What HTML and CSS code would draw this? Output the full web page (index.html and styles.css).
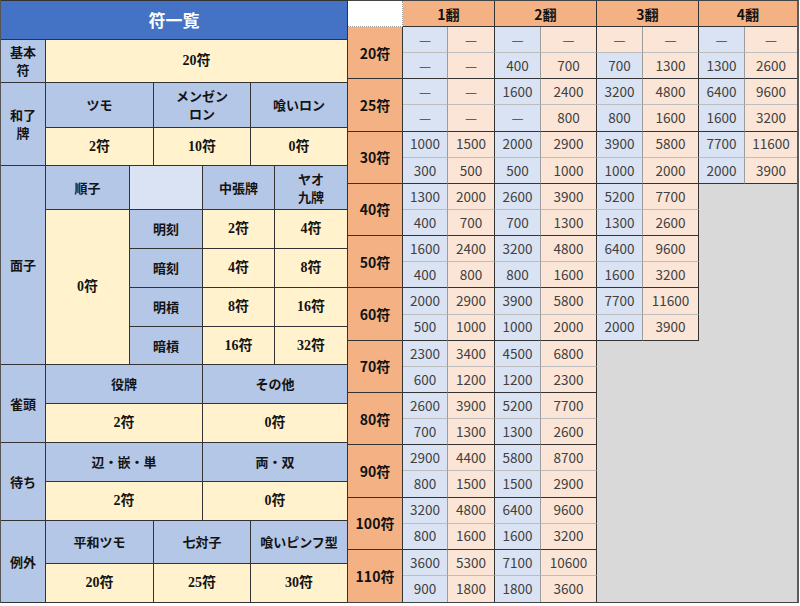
FILE: index.html
```html
<!DOCTYPE html>
<html lang="ja">
<head>
<meta charset="utf-8">
<title>符一覧</title>
<link rel="stylesheet" href="styles.css">
</head>
<body>
<main class="page">
  <section class="fu">
    <div class="c title">符一覧</div>

    <div class="c lab">基本<br>符</div>
    <div class="c val c-all">20符</div>

    <div class="c lab sp2">和了<br>牌</div>
    <div class="c hd ca">ツモ</div>
    <div class="c hd cb">メンゼン<br>ロン</div>
    <div class="c hd cc">喰いロン</div>
    <div class="c val ca">2符</div>
    <div class="c val cb">10符</div>
    <div class="c val cc">0符</div>

    <div class="c lab sp5">面子</div>
    <div class="c hd c-shun">順子</div>
    <div class="c blank c-kind"></div>
    <div class="c hd c-chu">中張牌</div>
    <div class="c hd c-yao">ヤオ<br>九牌</div>
    <div class="c val c-shun sp4">0符</div>
    <div class="c hd c-kind">明刻</div>
    <div class="c val c-chu">2符</div>
    <div class="c val c-yao">4符</div>
    <div class="c hd c-kind">暗刻</div>
    <div class="c val c-chu">4符</div>
    <div class="c val c-yao">8符</div>
    <div class="c hd c-kind">明槓</div>
    <div class="c val c-chu">8符</div>
    <div class="c val c-yao">16符</div>
    <div class="c hd c-kind">暗槓</div>
    <div class="c val c-chu">16符</div>
    <div class="c val c-yao">32符</div>

    <div class="c lab sp2">雀頭</div>
    <div class="c hd cl">役牌</div>
    <div class="c hd cr">その他</div>
    <div class="c val cl">2符</div>
    <div class="c val cr">0符</div>

    <div class="c lab sp2">待ち</div>
    <div class="c hd cl">辺・嵌・単</div>
    <div class="c hd cr">両・双</div>
    <div class="c val cl">2符</div>
    <div class="c val cr">0符</div>

    <div class="c lab sp2">例外</div>
    <div class="c hd ca">平和ツモ</div>
    <div class="c hd cb">七対子</div>
    <div class="c hd cc">喰いピンフ型</div>
    <div class="c val ca">20符</div>
    <div class="c val cb">25符</div>
    <div class="c val cc">30符</div>
  </section>

  <section class="rt">
    <div class="corner"></div>
    <div class="h">1翻</div>
    <div class="h">2翻</div>
    <div class="h">3翻</div>
    <div class="h e">4翻</div>

    <div class="f">20符</div>
    <div class="x b">—</div><div class="x p k">—</div><div class="x b">—</div><div class="x p k">—</div><div class="x p">—</div><div class="x p k">—</div><div class="x b">—</div><div class="x p k e">—</div>
    <div class="x b d s2">—</div><div class="x p k d">—</div><div class="x b d">400</div><div class="x p k d">700</div><div class="x b d">700</div><div class="x p k d">1300</div><div class="x b d">1300</div><div class="x p k d e">2600</div>

    <div class="f">25符</div>
    <div class="x b">—</div><div class="x p k">—</div><div class="x b">1600</div><div class="x p k">2400</div><div class="x b">3200</div><div class="x p k">4800</div><div class="x b">6400</div><div class="x p k e">9600</div>
    <div class="x b d s2">—</div><div class="x p k d">—</div><div class="x b d">—</div><div class="x p k d">800</div><div class="x b d">800</div><div class="x p k d">1600</div><div class="x b d">1600</div><div class="x p k d e">3200</div>

    <div class="f">30符</div>
    <div class="x b">1000</div><div class="x p k">1500</div><div class="x b">2000</div><div class="x p k">2900</div><div class="x b">3900</div><div class="x p k">5800</div><div class="x b">7700</div><div class="x p k e">11600</div>
    <div class="x b d s2">300</div><div class="x p k d">500</div><div class="x b d">500</div><div class="x p k d">1000</div><div class="x b d">1000</div><div class="x p k d">2000</div><div class="x b d">2000</div><div class="x p k d e">3900</div>

    <div class="f">40符</div>
    <div class="x b">1300</div><div class="x p k">2000</div><div class="x b">2600</div><div class="x p k">3900</div><div class="x b">5200</div><div class="x p k">7700</div>
    <div class="x b d s2">400</div><div class="x p k d">700</div><div class="x b d">700</div><div class="x p k d">1300</div><div class="x b d">1300</div><div class="x p k d">2600</div>

    <div class="f">50符</div>
    <div class="x b">1600</div><div class="x p k">2400</div><div class="x b">3200</div><div class="x p k">4800</div><div class="x b">6400</div><div class="x p k">9600</div>
    <div class="x b d s2">400</div><div class="x p k d">800</div><div class="x b d">800</div><div class="x p k d">1600</div><div class="x b d">1600</div><div class="x p k d">3200</div>

    <div class="f">60符</div>
    <div class="x b">2000</div><div class="x p k">2900</div><div class="x b">3900</div><div class="x p k">5800</div><div class="x b">7700</div><div class="x p k">11600</div>
    <div class="x b d s2">500</div><div class="x p k d">1000</div><div class="x b d">1000</div><div class="x p k d">2000</div><div class="x b d">2000</div><div class="x p k d">3900</div>

    <div class="f">70符</div>
    <div class="x b">2300</div><div class="x p k">3400</div><div class="x b">4500</div><div class="x p k">6800</div>
    <div class="x b d s2">600</div><div class="x p k d">1200</div><div class="x b d">1200</div><div class="x p k d">2300</div>

    <div class="f">80符</div>
    <div class="x b">2600</div><div class="x p k">3900</div><div class="x b">5200</div><div class="x p k">7700</div>
    <div class="x b d s2">700</div><div class="x p k d">1300</div><div class="x b d">1300</div><div class="x p k d">2600</div>

    <div class="f">90符</div>
    <div class="x b">2900</div><div class="x p k">4400</div><div class="x b">5800</div><div class="x p k">8700</div>
    <div class="x b d s2">800</div><div class="x p k d">1500</div><div class="x b d">1500</div><div class="x p k d">2900</div>

    <div class="f">100符</div>
    <div class="x b">3200</div><div class="x p k">4800</div><div class="x b">6400</div><div class="x p k">9600</div>
    <div class="x b d s2">800</div><div class="x p k d">1600</div><div class="x b d">1600</div><div class="x p k d">3200</div>

    <div class="f z">110符</div>
    <div class="x b">3600</div><div class="x p k">5300</div><div class="x b">7100</div><div class="x p k">10600</div>
    <div class="x b d s2 z">900</div><div class="x p k d z">1800</div><div class="x b d z">1800</div><div class="x p k d z">3600</div>
  </section>
</main>
</body>
</html>
```

FILE: styles.css
```css
* {
  box-sizing: border-box;
}

html, body {
  margin: 0;
  background: #ffffff;
}

body {
  font-family: "Noto Sans CJK JP", "Noto Sans", sans-serif;
  color: #111111;
}

.page {
  display: flex;
  width: 800px;
  height: 606px;
  align-items: flex-start;
}

/* ---------- left: 符一覧 ---------- */
.fu {
  display: grid;
  width: 348px;
  flex: none;
  grid-template-columns: 45px 84px 24px 49px 48px 24px 73px;
  grid-template-rows: 40px 43px 45px 38px 44px 39px 39px 39px 38px 39px 39px 39px 39px 43px 39px;
  border-left: 1px solid #555555;
}

.c {
  display: flex;
  align-items: center;
  justify-content: center;
  text-align: center;
  border-right: 1px solid #333333;
  border-bottom: 1px solid #333333;
  font-weight: 700;
  font-size: 13px;
  line-height: 18px;
  color: #141414;
}

.title {
  grid-column: 1 / 8;
  background: #4472c4;
  color: #ffffff;
  font-size: 17px;
  border-top: 1px solid #333333;
}

.lab {
  grid-column: 1;
  background: #b4c7e7;
}

.sp2 { grid-row: span 2; }
.sp4 { grid-row: span 4; }
.sp5 { grid-row: span 5; }

.hd {
  background: #b4c7e7;
}

.val {
  background: #fff2cc;
  font-family: "Liberation Serif", "Noto Sans CJK JP", serif;
  font-size: 14px;
}

.blank {
  background: #dae3f3;
}

.c-all  { grid-column: 2 / 8; }
.ca     { grid-column: 2 / 4; }
.cb     { grid-column: 4 / 6; }
.cc     { grid-column: 6 / 8; }
.cl     { grid-column: 2 / 5; }
.cr     { grid-column: 5 / 8; }
.c-shun { grid-column: 2 / 3; }
.c-kind { grid-column: 3 / 5; }
.c-chu  { grid-column: 5 / 7; }
.c-yao  { grid-column: 7 / 8; }

/* ---------- right: 点数表 ---------- */
.rt {
  display: grid;
  width: 451px;
  flex: none;
  grid-template-columns: 55px 45px 47px 46px 56px 46px 56px 46px 52px;
  grid-template-rows: 26px repeat(22, 26.15px);
  background: #d9d9d9;
  border-top: 1px solid #444444;
  border-right: 2px solid #5a5a5a;
  border-bottom: 1px solid #444444;
}

.corner {
  grid-column: 1;
  background: #ffffff;
  border-right: 1px dotted #9a9a9a;
  border-bottom: 1px dotted #9a9a9a;
}

.h {
  grid-column: span 2;
  display: flex;
  align-items: center;
  justify-content: center;
  background: #f4b183;
  font-weight: 700;
  font-size: 14px;
  border-right: 1px solid #333333;
  border-bottom: 1px solid #333333;
}

.f {
  grid-column: 1;
  grid-row: span 2;
  display: flex;
  align-items: center;
  justify-content: center;
  background: #f4b183;
  font-weight: 700;
  font-size: 14px;
  border-right: 1px solid #333333;
  border-bottom: 1px solid #333333;
}

.x {
  display: flex;
  align-items: center;
  justify-content: center;
  font-size: 13.5px;
  line-height: 1;
  color: #404040;
  border-right: 1px solid #9c9c9c;
  border-bottom: 1px solid #bdbdbd;
}

.b { background: #dae3f3; }
.p { background: #fbe5d6; }
.k { border-right-color: #333333; }
.d { border-bottom-color: #333333; }
.e { border-right: 0; }
.z { border-bottom: 0; }
.s2 { grid-column-start: 2; }
```
